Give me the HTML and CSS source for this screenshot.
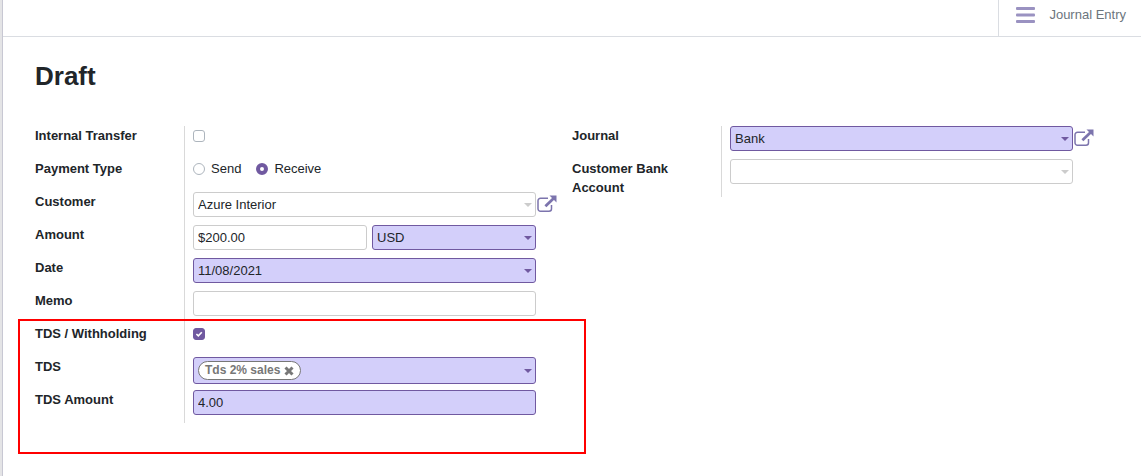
FILE: index.html
```html
<!DOCTYPE html>
<html lang="en">
<head>
<meta charset="utf-8">
<title>Draft Payment</title>
<link rel="stylesheet" href="styles.css">
</head>
<body>
<svg class="defs" aria-hidden="true">
  <symbol id="caret" viewBox="0 0 8 4"><path d="M0 0h8L4 4z" fill="currentColor"/></symbol>
  <symbol id="external" viewBox="0 0 20 18">
    <path d="M11 3.2H3.500A2.500 2.500 0 0 0 1 5.700v8A2.500 2.500 0 0 0 3.500 16.200h8.500a2.500 2.500 0 0 0 2.500-2.500V10" fill="none" stroke="currentColor" stroke-width="1.500"/>
    <path d="M8.400 11.300 16.500 3.500" fill="none" stroke="currentColor" stroke-width="2.800"/>
    <path d="M12.500 .500h7v7z" fill="currentColor"/>
  </symbol>
</svg>
<main class="sheet">
  <header class="topbar">
    <button class="stat" type="button">
      <svg class="bars" viewBox="0 0 19 16" aria-hidden="true"><g fill="currentColor"><rect width="19" height="3" rx="1"/><rect y="6.500" width="19" height="3" rx="1"/><rect y="13" width="19" height="3" rx="1"/></g></svg>
      <span>Journal Entry</span>
    </button>
  </header>
  <form class="form">
    <h1 class="title">Draft</h1>
    <div class="groups">
      <div class="group">
        <div class="row">
          <label class="label" for="internal">Internal Transfer</label>
          <div class="cell"><input class="check" type="checkbox" id="internal"></div>
        </div>
        <div class="row">
          <span class="label" id="ptype">Payment Type</span>
          <div class="cell radios" role="radiogroup" aria-labelledby="ptype">
            <label class="option"><input class="radio" type="radio" name="type">Send</label>
            <label class="option"><input class="radio" type="radio" name="type" checked>Receive</label>
          </div>
        </div>
        <div class="row">
          <label class="label" for="customer">Customer</label>
          <div class="cell">
            <div class="field"><select class="control" id="customer"><option>Azure Interior</option></select><svg class="caret"><use href="#caret"/></svg></div>
            <button class="open" type="button" aria-label="Open customer"><svg class="external"><use href="#external"/></svg></button>
          </div>
        </div>
        <div class="row">
          <label class="label" for="amount">Amount</label>
          <div class="cell split">
            <div class="field"><input class="control" id="amount" value="$200.00"></div>
            <div class="field currency required"><select class="control" aria-label="Currency"><option>USD</option></select><svg class="caret"><use href="#caret"/></svg></div>
          </div>
        </div>
        <div class="row">
          <label class="label" for="date">Date</label>
          <div class="cell"><div class="field required"><input class="control" id="date" value="11/08/2021"><svg class="caret"><use href="#caret"/></svg></div></div>
        </div>
        <div class="row">
          <label class="label" for="memo">Memo</label>
          <div class="cell"><div class="field"><input class="control" id="memo"></div></div>
        </div>
        <div class="row">
          <label class="label" for="withholding">TDS / Withholding</label>
          <div class="cell"><input class="check" type="checkbox" id="withholding" checked></div>
        </div>
        <div class="row">
          <label class="label" for="tds">TDS</label>
          <div class="cell">
            <div class="field required tags">
              <span class="tag">Tds 2% sales<button class="remove" type="button" aria-label="Remove tag"><svg class="cross" viewBox="0 0 10 10"><path d="M1.500 1.500l7 7M8.500 1.500l-7 7" stroke="currentColor" stroke-width="3"/></svg></button></span>
              <input class="tag-input" id="tds"><svg class="caret"><use href="#caret"/></svg>
            </div>
          </div>
        </div>
        <div class="row">
          <label class="label" for="tdsamount">TDS Amount</label>
          <div class="cell"><div class="field required"><input class="control" id="tdsamount" value="4.00"></div></div>
        </div>
        <div class="highlight"></div>
      </div>
      <div class="group">
        <div class="row">
          <label class="label" for="journal">Journal</label>
          <div class="cell">
            <div class="field required"><select class="control" id="journal"><option>Bank</option></select><svg class="caret"><use href="#caret"/></svg></div>
            <button class="open" type="button" aria-label="Open journal"><svg class="external"><use href="#external"/></svg></button>
          </div>
        </div>
        <div class="row">
          <label class="label" for="account">Customer Bank Account</label>
          <div class="cell"><div class="field"><select class="control" id="account"><option></option></select><svg class="caret"><use href="#caret"/></svg></div></div>
        </div>
      </div>
    </div>
  </form>
</main>
</body>
</html>
```
FILE: styles.css
```css
* { box-sizing: border-box; }
body {
  margin: 0;
  padding-left: 2px;
  background: #e4e4e6;
  color: #212529;
  font: 13px/19px "Liberation Sans", Arial, sans-serif;
}
button, input, select { font: inherit; color: inherit; margin: 0; }
button { padding: 0; border: 0; background: none; }
.defs { position: absolute; width: 0; height: 0; }
.sheet {
  min-height: 100vh;
  background: #fff;
  border-left: 1px solid #c8c8d3;
}
.topbar {
  display: flex;
  justify-content: flex-end;
  height: 37px;
  border-bottom: 1px solid #dadde2;
}
.stat {
  display: flex;
  align-items: flex-start;
  gap: 14px;
  padding: 5px 15px 0 17px;
  border-left: 1px solid #dadde2;
  color: #6c757d;
}
.bars { width: 19px; height: 16px; margin-top: 2px; color: #9a92c1; }
.form { padding: 23px 32px; }
.title { margin: 0 0 34px; font-size: 26px; line-height: 32px; }
.groups {
  display: grid;
  grid-template-columns: 1fr 1fr;
  align-items: start;
}
.group { position: relative; }
.row { display: grid; grid-template-columns: 149px 1fr; min-height: 33px; }
.label { padding-right: 32px; font-weight: bold; }
.cell {
  display: flex;
  align-items: flex-start;
  padding: 0 36px 0 8px;
  border-left: 1px solid #d9d9d9;
}
.field {
  position: relative;
  display: flex;
  flex: 1;
  min-width: 0;
  height: 25px;
  border: 1px solid #ccc;
  border-radius: 3px;
  color: #ccc;
  background: #fff;
}
.required { border-color: #7059a0; color: #7059a0; background: #d3cffa; }
.control {
  width: 100%;
  padding: 0 4px;
  border: 0;
  background: none;
  color: #212529;
  appearance: none;
}
.caret {
  position: absolute;
  right: 3px;
  top: 10px;
  width: 8px;
  height: 4px;
  pointer-events: none;
}
.split { gap: 5px; }
.currency { flex: 0 0 164px; }
.open { width: 20px; height: 18px; margin: 3px -21px 0 1px; color: #7c74ad; }
.external { display: block; width: 20px; height: 18px; }
.check, .radio {
  appearance: none;
  width: 12px;
  height: 12px;
  border: 1px solid #adb5bd;
  background: #fff;
}
.check { margin-top: 4px; border-radius: 3px; }
.check:checked {
  border-color: #7059a0;
  background: #7059a0 url("data:image/svg+xml,%3Csvg xmlns='http://www.w3.org/2000/svg' viewBox='0 0 10 10'%3E%3Cpath d='M2.400 5l1.900 1.900L7.800 3.200' fill='none' stroke='white' stroke-width='1.600'/%3E%3C/svg%3E") center / 10px 10px no-repeat;
}
.radio { border-radius: 50%; }
.radio:checked { border: 4px solid #7059a0; }
.radios { gap: 15px; }
.option { display: flex; align-items: center; gap: 6px; }
.tags { height: 27px; align-items: center; padding: 0 4px; }
.tags .caret { top: 11px; }
.tag {
  display: flex;
  align-items: center;
  gap: 4px;
  height: 19px;
  padding: 0 6px;
  border: 1px solid #777;
  border-radius: 10px;
  background: #fff;
  color: #777;
  font-size: 12px;
  font-weight: bold;
}
.cross { display: block; width: 10px; height: 10px; }
.tag-input { flex: 1; min-width: 0; border: 0; background: none; }
.highlight {
  position: absolute;
  top: 193px;
  right: -14px;
  bottom: -31px;
  left: -17px;
  border: 2px solid #f00;
  pointer-events: none;
}
```
